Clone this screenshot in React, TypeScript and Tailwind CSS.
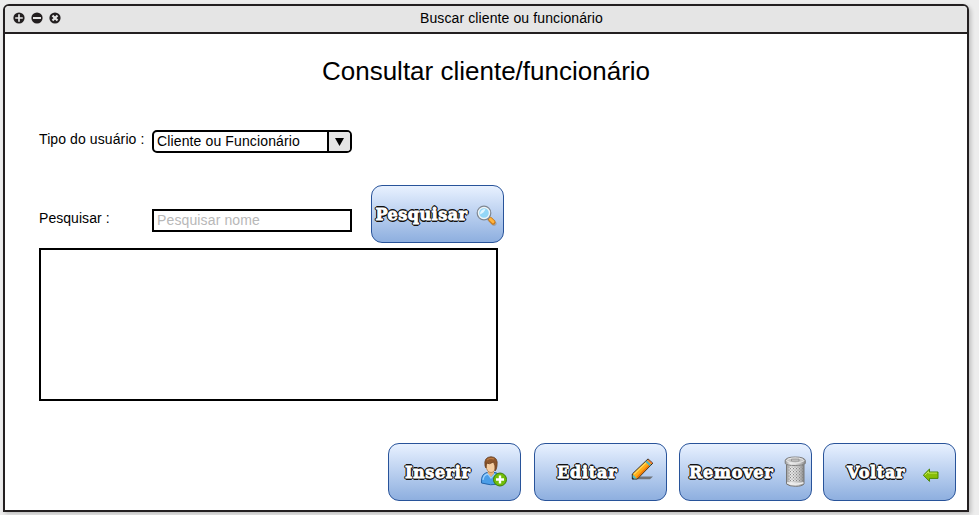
import type { ReactNode } from "react";

const outline =
  "[text-shadow:1.6px_0_0_#111,-1.6px_0_0_#111,0_1.6px_0_#111,0_-1.6px_0_#111,1.2px_1.2px_0_#111,-1.2px_-1.2px_0_#111,1.2px_-1.2px_0_#111,-1.2px_1.2px_0_#111] [-webkit-text-stroke:0.8px_#fff]";

function ActionButton({ label, pad, labelClass, icon }: { label: string; pad: string; labelClass: string; icon: ReactNode }) {
  return (
    <button
      className={`flex h-[58px] w-[133px] shrink-0 items-start rounded-[11px] border border-[#28539a] bg-gradient-to-b from-[#e8f1ff] to-[#8eafdf] ${pad}`}
    >
      <span
        className={`mt-[18px] shrink-0 whitespace-nowrap text-left font-['DejaVu_Serif',serif] text-[16px] leading-[22px] font-bold text-white ${outline} ${labelClass}`}
      >
        {label}
      </span>
      {icon}
    </button>
  );
}

function SearchIcon() {
  return (
    <svg className="mt-[19px] shrink-0" width="22" height="23" viewBox="0 0 22 23">
      <path d="M13.5 14 L18 18.5" stroke="#8c8c8c" strokeWidth="5" strokeLinecap="round" opacity=".5" />
      <path d="M12 12.5 L15 15.5" stroke="#777" strokeWidth="2.5" />
      <path d="M14.6 14.6 L17.2 17.2" stroke="#c8791c" strokeWidth="4.8" strokeLinecap="round" />
      <path d="M14.4 14.2 L17 16.8" stroke="#ffb43c" strokeWidth="3" strokeLinecap="round" />
      <circle cx="8" cy="8" r="6.4" fill="#8fd3f5" stroke="#7e8791" strokeWidth="2" />
      <circle cx="8" cy="8" r="5.5" fill="#93d7f7" stroke="#eef4f7" strokeWidth="1.4" />
      <path d="M4 9.5 Q4 4 9.5 4 Q8 8 4 9.5Z" fill="#e2f6ff" />
    </svg>
  );
}

function UserAddIcon() {
  return (
    <svg className="mt-[12px] shrink-0" width="29" height="32" viewBox="0 0 29 32">
      <path d="M1.5 26 Q1 18 7 16.5 L15.5 16.5 Q21 18 20.5 28 Q10 30 1.5 27Z" fill="#4b9ee8" stroke="#2565aa" />
      <path d="M3 24 Q3.5 18.5 8 18 L11 22 L15 18" fill="none" stroke="#9bd0ff" strokeWidth="1.3" />
      <path d="M8 14 H14 V17.5 L11 21 L7.5 17Z" fill="#e5b27f" />
      <ellipse cx="11" cy="9.5" rx="5" ry="7" fill="#f5cda1" stroke="#a8743e" strokeWidth=".7" />
      <path d="M5 10 Q3.5 1 11 .7 Q18.5 1 17 10 Q16.5 14 15 15 Q15.5 9 13.5 6 Q9 9 6.5 7 L6 12Z" fill="#8c562c" stroke="#623717" strokeWidth=".7" />
      <path d="M7 4 Q10 1.5 14 3" fill="none" stroke="#bd7b43" strokeWidth="1.2" />
      <circle cx="20" cy="23.5" r="6.5" fill="#70bd08" stroke="#3e7e08" strokeWidth="1" />
      <path d="M20 19.5 V27.5 M16 23.5 H24" stroke="#fff" strokeWidth="2.4" />
    </svg>
  );
}

function PencilIcon() {
  return (
    <svg className="mt-[14px] shrink-0" width="24" height="24" viewBox="0 0 24 24">
      <path d="M4 21.3 L9 18.5 H22 L19 21.3Z" fill="#70747a" />
      <path d="M1.3 21 V16 L17 .9 L21.8 5.2 L6.3 21Z" fill="#ffac18" stroke="#1c1a18" strokeWidth=".9" />
      <path d="M3 16.3 L15.6 4.1" stroke="#ffd85a" strokeWidth="1.4" />
      <path d="M5.8 19.6 L18.8 6.6" stroke="#f17b0a" strokeWidth="1.7" />
      <path d="M14.4 4 L18.7 8 L20.1 6.5 L15.9 2.5Z" fill="#4fb4c4" />
      <path d="M17 1.9 L20.9 5.5" stroke="#f0703a" strokeWidth="1.2" />
      <path d="M1.8 20.6 V16.6 L5.8 20.6Z" fill="#49bed2" />
      <path d="M1 21.3 V19 L3.4 21.3Z" fill="#162b40" />
    </svg>
  );
}

function TrashIcon() {
  return (
    <svg className="mt-[12px] shrink-0" width="23" height="32" viewBox="0 0 23 32">
      <defs>
        <linearGradient id="can">
          <stop offset="0" stopColor="#999" />
          <stop offset=".25" stopColor="#eee" />
          <stop offset=".7" stopColor="#ccc" />
          <stop offset="1" stopColor="#888" />
        </linearGradient>
        <pattern id="mesh" width="3" height="3" patternUnits="userSpaceOnUse">
          <rect width="1" height="1.2" fill="#888" />
          <rect x="1.5" y="1.5" width="1" height="1.2" fill="#8c8c8c" />
        </pattern>
      </defs>
      <path d="M2.5 7 H20 V28 Q18 30.3 11.5 30.3 Q5 30.3 2.5 28Z" fill="url(#can)" stroke="#777" />
      <path d="M4 9 H19 V26 H4Z" fill="url(#mesh)" />
      <path d="M3 26.8 Q11 29.5 19.5 26.8" fill="none" stroke="#eee" strokeWidth="1.5" />
      <path d="M1.2 4.5 Q2 1 11.2 1 Q20.5 1 21.3 4.5 V7.5 Q19 9.5 11.2 9.5 Q3 9.5 1.2 7.5Z" fill="url(#can)" stroke="#808080" />
      <path d="M2.3 4.8 Q4 2 11.2 2 Q18.5 2 20.2 4.8 Q16 7 11.2 7 Q6 7 2.3 4.8Z" fill="#c4c4c4" stroke="#eee" strokeWidth=".8" />
      <path d="M7.5 3.2 H15 V5 H7.5Z" fill="#dedede" stroke="#888" strokeWidth=".8" />
    </svg>
  );
}

function BackIcon() {
  return (
    <svg className="mt-[23px] shrink-0" width="18" height="18" viewBox="0 0 18 18">
      <path d="M1.3 8.2 L7.5 2 V5 H16 V11.4 H7.5 V14.4Z" fill="#87bd08" stroke="#4b870b" />
      <path d="M2.8 8.2 L6.5 4.5 V6.1 H15" fill="none" stroke="#c5e858" />
    </svg>
  );
}

function WindowControl({ children }: { children: ReactNode }) {
  return (
    <svg width="12" height="12" viewBox="0 0 12 12">
      <circle cx="6" cy="6" r="5.6" fill="#231f20" />
      <g stroke="#e6e6e6" strokeWidth="1.7">{children}</g>
    </svg>
  );
}

export default function App() {
  return (
    <div className="h-[515px] w-[979px] overflow-hidden bg-[#ededed] pt-[4px] pl-[3px] font-['Liberation_Sans',Arial,sans-serif] text-[14px] leading-[16px] text-black">
      <div className="flex h-[508px] w-[966px] flex-col rounded-t-[6px] border-2 border-[#231f20] bg-white shadow-[2px_2px_4px_rgba(0,0,0,0.2)]">
        <header className="flex h-[28px] shrink-0 items-start rounded-t-[4px] border-b-2 border-[#231f20] bg-[#e5e5e5]">
          <div className="flex w-[415px] gap-[6px] pt-[5.5px] pl-[7.5px]">
            <WindowControl><path d="M6 2.2 V9.8 M2.2 6 H9.8" /></WindowControl>
            <WindowControl><path d="M2 6 H10" strokeWidth="2" /></WindowControl>
            <WindowControl><path d="M3.5 3.5 L8.5 8.5 M8.5 3.5 L3.5 8.5" strokeWidth="2.2" /></WindowControl>
          </div>
          <span className="pt-[4px] tracking-[0.11px]">Buscar cliente ou funcionário</span>
        </header>

        <h1 className="mt-[22px] h-[30px] text-center text-[26px] leading-[30px]">Consultar cliente/funcionário</h1>

        <div className="mt-[44px] flex h-[23px] pl-[34px]">
          <label className="w-[113px] pt-px tracking-[0.1px]">Tipo do usuário :</label>
          <div className="flex h-[23px] w-[200px] overflow-hidden rounded-[5px] border-2 border-black">
            <span className="flex-1 pt-[1px] pl-[3px] tracking-[0.13px]">Cliente ou Funcionário</span>
            <span className="flex w-[23px] items-center justify-center border-l-2 border-black bg-[#e5e5e5]">
              <svg width="9" height="8" viewBox="0 0 9 8"><path d="M0 0H9L4.5 8Z" /></svg>
            </span>
          </div>
        </div>

        <div className="mt-[32px] flex h-[58px] pl-[34px]">
          <label className="w-[113px] pt-[25px] tracking-[0.05px]">Pesquisar :</label>
          <input
            className="mt-[24px] mr-[19px] h-[23px] w-[200px] border-2 border-black bg-white pb-[2px] pl-[3px] tracking-[0.13px] outline-none placeholder:text-[#b8b8b8] placeholder:opacity-100"
            placeholder="Pesquisar nome"
          />
          <ActionButton label="Pesquisar" pad="pl-[3.5px]" labelClass="w-[100.5px] tracking-[0.5px]" icon={<SearchIcon />} />
        </div>

        <div className="mt-[5px] ml-[34px] h-[153px] w-[459px] shrink-0 border-2 border-black" />

        <div className="mt-[42px] flex pl-[383px]">
          <div className="mr-[13px]"><ActionButton label="Inserir" pad="pl-[16px]" labelClass="w-[75px] tracking-[0.6px]" icon={<UserAddIcon />} /></div>
          <div className="mr-[12px]"><ActionButton label="Editar" pad="pl-[22px]" labelClass="w-[74px] tracking-[0.8px]" icon={<PencilIcon />} /></div>
          <div className="mr-[11px]"><ActionButton label="Remover" pad="pl-[9px]" labelClass="w-[95px] tracking-[0.8px]" icon={<TrashIcon />} /></div>
          <ActionButton label="Voltar" pad="pl-[23px]" labelClass="w-[75px] tracking-[0.7px]" icon={<BackIcon />} />
        </div>
      </div>
    </div>
  );
}
